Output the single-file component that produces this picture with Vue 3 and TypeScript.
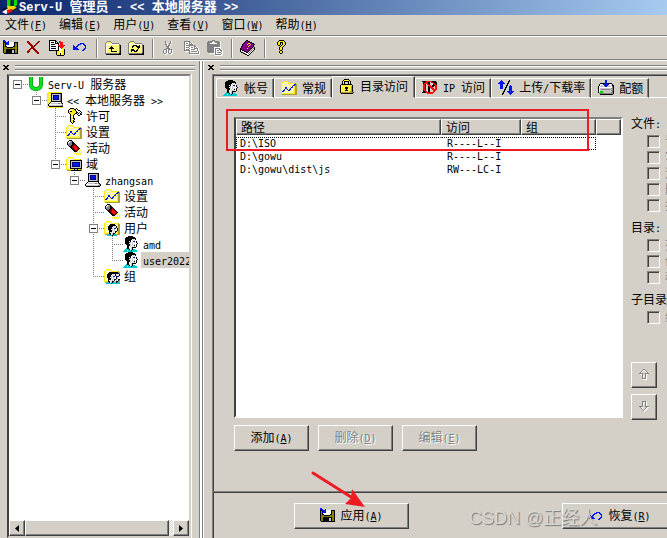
<script setup lang="ts">
import { h, ref } from 'vue'

type Art = string[]

const palette: Record<string, string> = {
  k: '#000000', w: '#ffffff', g: '#808080', l: '#c6c3c6', y: '#fff870', Y: '#ffe81c',
  o: '#a8a030', b: '#0018e8', B: '#000084', r: '#ff1010', R: '#9c0000', c: '#00c8d0',
  G: '#00d800', m: '#840084', v: '#d890d8', O: '#848200',
}

const blank: Art = Array(16).fill('................')

// Places one pixel drawing on top of another at an offset.
function layer(base: Art, top: Art, dx = 0, dy = 0): Art {
  return base.map((row, y) =>
    row.split('').map((px, x) => {
      const t = top[y - dy]?.[x - dx]
      return t && t !== '.' ? t : px
    }).join(''))
}

const folder: Art = [
  '................',
  '..YYYYY.........',
  '.YywywyY........',
  'YywywywYYYYYYYo.',
  'YwywywywywywyYoo',
  'YywywywywywywYoo',
  'YwywywywywywyYoo',
  'YywywywywywywYoo',
  'YwywywywywywyYoo',
  'YywywywywywywYoo',
  'YwywywywywywyYoo',
  'YywywywywywywYoo',
  'YwywywywywywyYoo',
  'YYYYYYYYYYYYYYoo',
  '.ooooooooooooooo',
  '................',
]
const barFolder: Art = [
  '................',
  '..gggg..........',
  '.gyyyyg.........',
  'gyyyyyyggggggg..',
  'gwwwwwwwwwwwwwg.',
  'gwyyyyyyyyyyyygk',
  'gwyyyyyyyyyyyygk',
  'gwyyyyyyyyyyyygk',
  'gwyyyyyyyyyyyygk',
  'gwyyyyyyyyyyyygk',
  'gwyyyyyyyyyyyygk',
  'gwyyyyyyyyyyyygk',
  'gwyyyyyyyyyyyygk',
  'ggggggggggggggkk',
  '.kkkkkkkkkkkkkkk',
  '................',
]
const chart: Art = [
  '............bb', '...........bb.', '..........b...', '...bb....bb...',
  '...bb...b.....', '..b..b.bb.....', '.bb...bb......', 'bb............',
]
const head: Art = [
  '.....kkkkk......',
  '...kkkkkkkkk....',
  '..kkkkkkkkkkk...',
  '..kkkkkkkwlwk...',
  '..kkkkkkwlwlw...',
  '..kkkkwkwwbbwk..',
  '..kkkkklwlwlwk..',
  '..kkkkwlwlwwwwk.',
  '...kkkklwlwlwk..',
  '....kkkwlwlkwk..',
  '....kkwlwlwlwk..',
  '....kkwwlkkkk...',
  '...ckklwlk......',
  '..cccckwlkcc....',
  '.cccwccckccccc..',
  'cccccccccccccc..',
]
const smallHead: Art = [
  '...kkkkk....', '..kkkkkkk...', '.kkkkkwlwk..', '.kkkkwlwlk..', '.kkkklwbbwk.',
  '.kkkwlwlwwk.', '..kkklwlwwk.', '..kkkwlwkk..', '..kwlwlwk...', '..kkwlkk....',
  '.cckwlkcc...', 'ccccckcccc..',
]
const monitor: Art = [
  '................',
  '...kkkkkkkkkkk..',
  '...kllllllllgk..',
  '...klBBBBBBlgk..',
  '...klBbbbbBlgk..',
  '...klBbbbbBlgk..',
  '...klBbbbbBlgk..',
  '...klBBBBBBlgk..',
  '...kllllllllgk..',
  '...kkkkkkkkkkk..',
  '..kwwwwwwwwwwk..',
  '.kwlllllllgglgk.',
  'kwwwwwwwwwwwwwgk',
  'kllllllllllllggk',
  '.kkkkkkkkkkkkkk.',
  '................',
]
const smallMonitor: Art = [
  'kkkkkkkkkkkk', 'kllllllllllk', 'klBBBBBBBBlk', 'klBbbbbbbBlk', 'klBbbbbbbBlk',
  'klBbbbbbbBlk', 'klBBBBBBBBlk', 'kllllllllllk', 'kkkkkkkkkkkk', '....kllk....', '.kkkkkkkkkk.',
]
const halo: Art = [
  '.YYYYYYYYYYYYY..', 'YYyYyYyYyYyYyY..', 'YyYyYyYyYyYyYy..', 'YYyYyYyYyYyYyY..',
  'YyYyYyYyYyYyYy..', 'YYyYyYyYyYyYyY..', 'YyYyYyYyYyYyYy..', 'YYyYyYyYyYyYyY..',
  'YyYyYyYyYyYyYy..', 'YYyYyYyYyYyYyY..', 'YYyYyYyYyYyYyYy.', 'YyYyYyYyYyYyYyY.',
  'YyYyYyYyYyYyYyY.', 'YYyYyYyYyYyYyYy.', 'YyYyYyYyYyYyYyY.', 'YYYYYYYYYYYYYYY.',
]

const art: Record<string, Art> = {
  save: [
    'bb..............', 'bbb..b..........', 'kkbbbbwwwwwkkkk.', 'kOkbbbwwwwwkOOk.',
    'kObbbbwwwwwkOOk.', 'kOkwwwwwwwwkOOk.', 'kOkkwwwwwwkkOOk.', 'kOOOkkkkkkOOOOk.',
    'kOOOOOOOOOOOOOk.', 'kOOkkkkkkkkkOOk.', 'kOOkkkkkkllkOOk.', 'kOOkkkkkkllkOOk.',
    'kOOkkkkkkllkOOk.', '.kkkkkkkkkkkkkk.',
  ],
  remove: [
    '................', '.RR.........RR..', '.RRR.......RR...', '..RRR.....RR....',
    '...RRR...RR.....', '....RRR.RR......', '.....RRRR.......', '.....RRR........',
    '....RRRRR.......', '...RR..RRR......', '..RR....RRR.....', '.RRR.....RRR....',
    '.RR.......RRR...', '...........RR...',
  ],
  export: [
    'kkkkkkk.........', 'kwwwwwkk..rr....', 'kwkkkwkwk.rrrr..', 'kwwwwwkkkk.rrr..',
    'kwkkkkwwwk.rrr..', 'kwwwwwwwwrrrrrrr', 'kwkkkkkwwkrrrrr.', 'kwwwwwwwwkwrrr..',
    'kwkkkkkwwkwwrYY.', 'kwwwwwwwwkwwwYYk', 'kkkkkkkkkkwwwYYk', '.......kYYYYYYYk',
    '.......kYYwwwYYk', '.......kYYwkwYYk', '.......kYYwkwYYk', '........kkkkkkk.',
  ],
  undo: [
    '................', '................', '................', '........bbbb....',
    '......bbb..bb...', '.b...bb.....bb..', '.bb.bb.......b..', '.bbbb........b..',
    '.bbbbb......bb..', '.bbbbbb....bb...', '..........bb....', '................',
  ],
  up: layer(barFolder, ['..k......', '.kkk.....', 'kkkkk....', '..k......', '..k......', '..kkkkkk.'], 4, 6),
  refresh: layer(barFolder, ['..kkkk..k', '.kk..kkkk', '.k....kkk', '.......k.', 'kkk...k..', 'kkkk.kk..', 'k..kkk...'], 3, 5),
  cut: [
    '................', '....g....gw.....', '....gw...gw.....', '....gw..ggw.....',
    '....ggw.gw......', '.....gwggw......', '.....gggw.......', '......ggw.......',
    '.....ggggw......', '...gggwgggg.....', '..gwwgwgwwgw....', '..gw.gwgw.gw....',
    '..gw.gwgw.gw....', '...ggww.ggww....', '....ww...ww.....', '................',
  ],
  copy: [
    '................', 'gggggg..........', 'gwwwwggw........', 'gwggwgwgw.......',
    'gwwwwggggw......', 'gwggggggggg.....', 'gwwwwgwwwwggw...', 'gwgggwwggwgwgw..',
    'gwwwwgwwwwggggw.', 'gwgggwwggggwwgw.', 'ggggggwwwwwwwgw.', '.wwwwgwggggggwgw',
    '.....gwwwwwwwwgw', '.....ggggggggggw', '......wwwwwwwwww', '................',
  ],
  paste: [
    '.....ggg........', '.gggggwggggg....', 'gggggwwwgggggw..', 'gggwwwwwwwgggw..',
    'gggggggggggggw..', 'gggggggggggggw..', 'gggggggggggggw..', 'gggggggwwwwwww..',
    'gggggggwgggggw..', 'gggggggwgwwwggw.', 'gggggggwgwggwggw', 'gggggggwgwwwwwgw',
    '.ggggggwgwggggww', '..wwwwwwgwwwwwgw', '.......wggggggww', '........wwwwwww.',
  ],
  book: [
    '......kk........', '.....kmmkk......', '....kmmmmmkk....', '...kmmmmYYmmkk..',
    '..kmmmmYmmYmmmk.', '..kmmmmmmYmmmk..', '.kmmmmmmYmmmmk..', '.kmmmmmmmmmmk.k.',
    'kmmmmmmYmmmk.gk.', 'kkmmmmmmmmk.gwk.', 'kwkkmmmmmk.gwk..', 'kvwwkkmmk.gwk...',
    '.kkvwwkk.gwk....', '...kkvwwgwk.....', '.....kkwwk......', '.......kk.......',
  ],
  help: [
    '......kkkkk.....', '.....kYYYYYk....', '....kYYkkkYYk...', '....kYYk.kYYk...',
    '....kYYk.kYYk...', '.....kk.kYYk....', '.......kYYk.....', '......kYYk......',
    '......kYYk......', '......kYYk......', '.......kk.......', '......kYYk......',
    '......kYYk......', '.......kk.......',
  ],
  server: layer(halo, monitor, 1, 0),
  domains: layer(folder, smallMonitor, 4, 4),
  host: monitor,
  license: [
    '....kkkk..k.....', '...kYYYYkkwk....', '..kYwYYYYkwwkk..', '..kYkkYYYYkwwwk.',
    '..kYYYYYYYkkwgwk', '...kYYYYYkkwkwkg', '....kYYYk..kwwkk', '....kYYk....kk..',
    '....kYwk........', '....kYYk........', '....kYYkk.......', '....kYwYk.......',
    '....kYYk........', '....kYYkk.......', '.....kYk........', '......k.........',
  ],
  settings: layer(folder, chart, 1, 4),
  activity: [
    '...kkk..........', '..kwlgk.........', '.kwlggkk........', '.klgggkkk.......',
    '.kggggkkRk......', '..kggkkRRRk.....', '...kkkRRrrRk....', '....kkRRrrrRk...',
    '.....kkRrrrrRk..', '......kkRrrRkY..', '.......kkRRkYwY.', '........kkkYwYwY',
    '.........YwYwYwY', '........YwYwYwYw', '.........wYwYwY.', '................',
  ],
  user: head,
  users: layer(folder, smallHead, 3, 4),
  groups: layer(layer(folder, smallHead, 6, 4), smallHead, 2, 4),
  lock: [
    '................', '.....kkkkk......', '....kYwYwYk.....', '...kYkkkkkYk....',
    '...kwk...kwk....', '...kYk...kYk....', '..kkkkkkkkkkk...', '.kYyYyYyYyYyYk..',
    '.kyYyYyYyYyYok..', '.kYyYykkkYyYok..', '.kyYyYkkkyYyok..', '.kYyYyYkyYyYok..',
    '.kyYyYkkkyYyok..', '.kYyYyYyYyYook..', '.kooooooooooook.', '..kkkkkkkkkkkk..',
  ],
  ip: [
    '................', 'kkkkrrrrrrkkkk..', '.kkrrrkk.rrkkkk.', '.krrrrkk...rrkk.',
    '.rrk.rrk...krrk.', '.rrk..rrr.kkkrr.', '.rrk..krrrkk.rr.', '.rrk..kkrrr..rr.',
    '.rrk..kk.rrr.rr.', '.rrk..kk..rrrrr.', '.krr..kk...rrr..', '.kkrr.kk...rr...',
    'kkkkrrrkrrrr....', '.....rrrrrr.....', '................', '................',
  ],
  rates: [
    '...b.......k....', '..bbb.....kk....', '.bbbbb....k.....', 'bbbbbbb..kk.....',
    '..bbb....k......', '..bbb...kk..b...', '..bbb...k..bbb..', '..bbb..kk..bbb..',
    '..bbb..k...bbb..', '......kk...bbb..', '......k....bbb..', '.....kk..bbbbbbb',
    '.....k....bbbbb.', '....kk.....bbb..', '....k.......b...', '................',
  ],
  quota: [
    '.......bb.......', '.......bb.......', '.......bb.......', '..kkkkkbbkkkkk..',
    '.kwwwbbbbbbwwwk.', '.kwllwbbbbllwlkk', 'kwlllllbbllllwgk', 'kwwwwwwwwwwwwwgk',
    'kwlllllllllllggk', 'kwlgggggggggllgk', 'kwlllllllllllggk', 'kwGGGlllllllllgk',
    'klGGGllllllllggk', '.ggggggggggggggk', '..kkkkkkkkkkkkk.', '................',
  ],
  restore: layer(blank, ['........bbbb....', '......bbb..bb...', '.b...bb.....bb..', '.bb.bb.......b..', '.bbbb........b..', '.bbbbb......bb..', '.bbbbbb....bb...', '..........bb....'], 0, 4),
  moveUp: [
    '................', '................', '.......gg.......', '......gwwg......', '.....gw..wg.....',
    '....gw....wg....', '...gggg..gggg...', '....wwg..gww....', '......gw.gw.....', '......gw.gw.....',
    '......gw.gw.....', '......ggggw.....', '.......wwww.....',
  ],
  moveDown: [
    '................', '................', '......gggg......', '......gwwgw.....', '......gw.gw.....',
    '......gw.gw.....', '......gw.gw.....', '...gggg..gggg...', '....gww...gww...', '.....gw..gww....',
    '......gwgww.....', '.......gww......', '........w.......',
  ],
}

function PixelIcon(props: { name: string }) {
  const colours: Record<string, string> = {}
  art[props.name].forEach((row, y) => {
    row.split('').forEach((px, x) => {
      if (px !== '.') colours[px] = (colours[px] ?? '') + `M${x} ${y}h1v1h-1z`
    })
  })
  return h('svg', { class: 'pixel-icon', viewBox: '0 0 16 16', width: 16, height: 16, 'aria-hidden': 'true' },
    Object.entries(colours).map(([px, d]) => h('path', { d, fill: palette[px] })))
}
PixelIcon.props = ['name']

// Half-width characters use a monospaced face; "(X)" underlines its access key.
function Caption(props: { text: string }) {
  const parts = props.text.match(/[\x20-\x7e]+|[^\x20-\x7e]+/g) ?? []
  return h('span', { class: 'caption' }, parts.map((part) => {
    const key = /^\(([A-Z])\)$/.exec(part)
    if (key) return h('span', { class: 'half' }, ['(', h('u', key[1]), ')'])
    return /^[\x20-\x7e]/.test(part) ? h('span', { class: 'half' }, part) : part
  }))
}
Caption.props = ['text']

const menus = ['文件(F)', '编辑(E)', '用户(U)', '查看(V)', '窗口(W)', '帮助(H)']
const toolGroups = [
  [['save', '保存'], ['remove', '删除'], ['export', '导出'], ['undo', '撤消']],
  [['up', '向上'], ['refresh', '刷新']],
  [['cut', '剪切'], ['copy', '复制'], ['paste', '粘贴']],
  [['book', '手册']],
  [['help', '帮助']],
]

// guides: one letter per 19px column.
// n none, l line, t tee, e end, r root expander, x expander with line, y last expander
interface Node { guides: string; icon: string; text: string; selected?: boolean }
const nodes: Node[] = [
  { guides: 'r', icon: 'logo', text: 'Serv-U 服务器' },
  { guides: 'ny', icon: 'server', text: '<< 本地服务器 >>' },
  { guides: 'nnt', icon: 'license', text: '许可' },
  { guides: 'nnt', icon: 'settings', text: '设置' },
  { guides: 'nnt', icon: 'activity', text: '活动' },
  { guides: 'nny', icon: 'domains', text: '域' },
  { guides: 'nnny', icon: 'host', text: 'zhangsan' },
  { guides: 'nnnnt', icon: 'settings', text: '设置' },
  { guides: 'nnnnt', icon: 'activity', text: '活动' },
  { guides: 'nnnnx', icon: 'users', text: '用户' },
  { guides: 'nnnnlt', icon: 'user', text: 'amd' },
  { guides: 'nnnnle', icon: 'user', text: 'user2022', selected: true },
  { guides: 'nnnne', icon: 'groups', text: '组' },
]

const tabs = [
  { icon: 'user', text: '帐号' },
  { icon: 'settings', text: '常规' },
  { icon: 'lock', text: '目录访问' },
  { icon: 'ip', text: 'IP 访问' },
  { icon: 'rates', text: '上传/下载率' },
  { icon: 'quota', text: '配额' },
]
const activeTab = ref(2)

const rows = ref([
  { path: 'D:\\ISO', access: 'R----L--I' },
  { path: 'D:\\gowu', access: 'R----L--I' },
  { path: 'D:\\gowu\\dist\\js', access: 'RW---LC-I' },
])
const focused = ref(0)

const rights = [
  { title: '文件:', items: ['读', '写', '追', '删', '执'] },
  { title: '目录:', items: ['列', '创', '移'] },
  { title: '子目录:', items: ['继'] },
]
</script>

<template>
  <div class="window">
    <header class="title">
      <svg class="title-icon" viewBox="0 0 16 14" width="16" height="14" aria-hidden="true">
        <path d="M5 0h4v6H5zM12 0h3v5l-3 3z" fill="#00e000" />
        <path d="M5 6h7l3 2-4 3H6z" fill="#f4d800" />
        <path d="M0 12l5-3 4 2-5 3z" fill="#ffffff" />
        <path d="M5 10l5-1 1 2-6 3z" fill="#f01010" />
        <path d="M9 0v6M0 10l5-2M10 11l5-3" stroke="#000" fill="none" />
      </svg>
      <Caption text="Serv-U 管理员 - << 本地服务器 >>" />
    </header>

    <nav class="menu">
      <button v-for="m in menus" :key="m" type="button"><Caption :text="m" /></button>
    </nav>

    <div class="toolbar" role="toolbar">
      <div v-for="(group, i) in toolGroups" :key="i" class="tool-group">
        <button v-for="[name, label] in group" :key="name" type="button" :aria-label="label">
          <PixelIcon :name="name" />
        </button>
      </div>
    </div>

    <main class="panes">
      <section class="pane tree-pane">
        <div class="grip">
          <button type="button" aria-label="关闭"><svg viewBox="0 0 6 5" width="6" height="5"><path d="M0 0h2v1h2V0h2v1H5v1H4v1h1v1h1v1H4V4H2v1H0V4h1V3h1V2H1V1H0z" /></svg></button>
          <i></i>
        </div>
        <div class="tree-box">
          <div class="tree" role="tree">
            <div v-for="(n, i) in nodes" :key="i" class="node" role="treeitem" :aria-selected="!!n.selected">
              <span v-for="(g, j) in n.guides" :key="j" class="guide" :class="'g-' + g"><b v-if="'rxy'.includes(g)" class="box"></b></span>
              <svg v-if="n.icon === 'logo'" class="logo" viewBox="0 0 16 16" width="16" height="16" aria-hidden="true">
                <path d="M3 1v7q0 5 5 5t5-5V1" fill="none" stroke="#008000" stroke-width="4" />
                <path d="M3 1v7q0 5 5 5t5-5V1" fill="none" stroke="#10e020" stroke-width="3" />
              </svg>
              <PixelIcon v-else :name="n.icon" />
              <span class="node-text" :class="{ selected: n.selected }"><Caption :text="n.text" /></span>
            </div>
          </div>
          <div class="scroll">
            <button type="button" aria-label="向左滚动"><svg viewBox="0 0 4 7" width="4" height="7"><path d="M4 0v7L0 3.5z" /></svg></button>
            <span class="thumb"></span>
            <span class="track"></span>
            <button type="button" aria-label="向右滚动"><svg viewBox="0 0 4 7" width="4" height="7"><path d="M0 0v7l4-3.5z" /></svg></button>
          </div>
        </div>
      </section>

      <div class="splitter"></div>

      <section class="pane detail-pane">
        <div class="grip">
          <button type="button" aria-label="关闭"><svg viewBox="0 0 6 5" width="6" height="5"><path d="M0 0h2v1h2V0h2v1H5v1H4v1h1v1h1v1H4V4H2v1H0V4h1V3h1V2H1V1H0z" /></svg></button>
          <i></i>
        </div>
        <div class="sheet">
          <div class="tabs" role="tablist">
            <button v-for="(t, i) in tabs" :key="t.text" type="button" role="tab" class="tab" :class="{ active: i === activeTab }" :aria-selected="i === activeTab" @click="activeTab = i">
              <PixelIcon :name="t.icon" /><Caption :text="t.text" />
            </button>
            <span class="tab-fill"></span>
          </div>

          <div class="content">
            <div class="list-side">
              <div class="list">
                <table>
                  <colgroup><col class="c-path" /><col class="c-access" /><col class="c-group" /><col /></colgroup>
                  <thead>
                    <tr>
                      <th><span><Caption text="路径" /></span></th>
                      <th><span><Caption text="访问" /></span></th>
                      <th><span><Caption text="组" /></span></th>
                      <th><span></span></th>
                    </tr>
                  </thead>
                  <tbody>
                    <tr v-for="(r, i) in rows" :key="r.path" :class="{ focus: i === focused }" @click="focused = i">
                      <td><Caption :text="r.path" /></td>
                      <td><Caption :text="r.access" /></td>
                      <td></td>
                      <td></td>
                    </tr>
                  </tbody>
                </table>
              </div>
              <div class="actions">
                <button type="button" class="push"><Caption text="添加(A)" /></button>
                <button type="button" class="push" disabled><Caption text="删除(D)" /></button>
                <button type="button" class="push" disabled><Caption text="编辑(E)" /></button>
              </div>
            </div>

            <div class="rights">
              <fieldset v-for="group in rights" :key="group.title">
                <legend><Caption :text="group.title" /></legend>
                <label v-for="item in group.items" :key="item"><input type="checkbox" disabled />{{ item }}</label>
              </fieldset>
              <div class="movers">
                <button type="button" class="push" disabled aria-label="上移"><PixelIcon name="moveUp" /></button>
                <button type="button" class="push" disabled aria-label="下移"><PixelIcon name="moveDown" /></button>
              </div>
            </div>
          </div>

          <footer class="bottom">
            <button type="button" class="push wide"><PixelIcon name="save" /><Caption text="应用(A)" /></button>
            <button type="button" class="push wide"><PixelIcon name="restore" /><Caption text="恢复(R)" /></button>
            <span class="watermark">CSDN @正经人</span>
          </footer>
        </div>
      </section>
    </main>

    <div class="mark-box"></div>
    <svg class="mark-arrow" viewBox="0 0 56 38" width="56" height="38" aria-hidden="true">
      <path d="M2 2L40 26" stroke="#ed1c24" stroke-width="3" stroke-linecap="round" />
      <path d="M54 36L34 33l6-6 1-9z" fill="#ed1c24" />
    </svg>
  </div>
</template>

<style>
body { background: #d4d0c8; }
.pixel-icon { display: block; flex: none; shape-rendering: crispEdges; }
.caption { white-space: pre; }
.caption .half { font-family: "DejaVu Sans Mono", "Liberation Mono", monospace; font-size: 10px; }
.title .caption .half { font-family: "Liberation Mono", monospace; font-size: 12px; }
</style>

<style scoped>
.window {
  position: relative;
  display: flex;
  flex-direction: column;
  height: 100vh;
  overflow: hidden;
  background: #d4d0c8;
  color: #000;
  font: 12px/16px "Noto Sans CJK SC", sans-serif;
  cursor: default;
}
button { margin: 0; padding: 0; border: 0; background: none; color: inherit; font: inherit; }

.title {
  display: flex;
  flex: none;
  gap: 1px;
  height: 15px;
  padding-left: 2px;
  background: linear-gradient(90deg, #0a246a, #a6caf0);
  color: #fff;
  font-size: 13px;
  font-weight: bold;
  line-height: 12px;
}
.title-icon { flex: none; }

.menu {
  display: flex;
  flex: none;
  gap: 12px;
  height: 20px;
  padding-left: 5px;
  border-bottom: 1px solid #808080;
  white-space: nowrap;
}
.toolbar {
  display: flex;
  flex: none;
  align-items: center;
  height: 22px;
  padding-left: 3px;
  border-top: 1px solid #fff;
  border-bottom: 1px solid #808080;
}
.tool-group { display: flex; align-items: center; gap: 7px; }
.tool-group + .tool-group {
  height: 19px;
  margin-left: 8px;
  padding-left: 8px;
  border-left: 1px solid #808080;
  box-shadow: inset 1px 0 #fff;
}

.panes { display: flex; flex: 1; min-height: 0; border-top: 1px solid #fff; }
.pane { display: flex; flex-direction: column; min-width: 0; }
.tree-pane { flex: none; width: 199px; }
.splitter { flex: none; width: 2px; border-right: 1px solid #808080; border-left: 1px solid #808080; background: #fff; }
.detail-pane { flex: 1; border-left: 1px solid #fff; }
.grip { display: flex; flex: none; align-items: center; gap: 6px; height: 13px; padding: 0 4px 0 3px; }
.grip button { display: flex; }
.grip i { flex: 1; height: 2px; border-top: 1px solid #fff; border-bottom: 1px solid #808080; box-shadow: 0 1px #fff, 0 -1px #808080; }
.detail-pane .grip { padding: 0 0 0 4px; }

.tree-box {
  display: flex;
  flex: 1;
  flex-direction: column;
  min-height: 0;
  margin: 0 8px 0 7px;
  border: 2px solid;
  border-color: #808080 #d4d0c8 #d4d0c8 #404040;
  background: #fff;
  box-shadow: 1px 0 #fff;
}
.tree { flex: 1; min-height: 0; overflow: hidden; }
.node { display: flex; height: 16px; white-space: nowrap; }
.logo { flex: none; }
.guide { position: relative; display: flex; flex: none; align-items: center; width: 19px; height: 16px; }
.g-l::before, .g-t::before, .g-x::before, .g-e::before, .g-y::before {
  content: "";
  position: absolute;
  top: 0;
  left: 8px;
  width: 1px;
  height: 16px;
  background: repeating-linear-gradient(#808080 0 1px, #fff 1px 2px);
}
.g-e::before, .g-y::before { height: 8px; }
.g-t::after, .g-e::after, .g-x::after, .g-y::after, .g-r::after {
  content: "";
  position: absolute;
  top: 8px;
  left: 8px;
  width: 11px;
  height: 1px;
  background: repeating-linear-gradient(90deg, #808080 0 1px, #fff 1px 2px);
}
.box {
  position: relative;
  z-index: 1;
  box-sizing: border-box;
  width: 9px;
  height: 9px;
  margin: 1px 0 0 4px;
  border: 1px solid #808080;
  background: linear-gradient(#000, #000) center / 5px 1px no-repeat #fff;
}
.node-text { margin-left: 2px; padding: 0 2px; }
.node-text.selected { background: #d4d0c8; }

.scroll { display: flex; flex: none; height: 16px; background: #d4d0c8; }
.scroll button, .thumb {
  display: flex;
  align-items: center;
  justify-content: center;
  box-sizing: border-box;
  width: 16px;
  border: 1px solid;
  border-color: #fff #404040 #404040 #fff;
  box-shadow: inset -1px -1px #808080;
}
.scroll .thumb { flex: 1; }
.track { width: 4px; background: repeating-conic-gradient(#fff 0 25%, #d4d0c8 0 50%) 0 0 / 2px 2px; }

.sheet {
  display: flex;
  flex: 1;
  flex-direction: column;
  min-height: 0;
  margin-left: 8px;
  border-top: 1px solid #808080;
  border-left: 1px solid #808080;
  box-shadow: inset 1px 1px #404040;
}
.tabs { display: flex; flex: none; align-items: flex-end; height: 23px; padding-left: 3px; }
.tab {
  display: flex;
  flex: none;
  align-items: center;
  gap: 5px;
  box-sizing: border-box;
  height: 20px;
  padding: 0 5px 0 6px;
  border-top: 1px solid #fff;
  border-right: 1px solid #404040;
  border-bottom: 1px solid #fff;
  border-left: 1px solid #fff;
  box-shadow: inset -1px 0 #808080;
  white-space: nowrap;
}
.tab.active { height: 22px; padding: 0 6px 2px 6px; border-bottom-color: transparent; }
.tab-fill { flex: 1; border-bottom: 1px solid #fff; }

.content { display: flex; flex: 1; gap: 8px; min-height: 0; padding: 17px 0 40px 21px; }
.list-side { display: flex; flex: 1; flex-direction: column; gap: 7px; min-width: 0; padding-top: 2px; }
.list {
  flex: 1;
  min-height: 0;
  overflow: hidden;
  border: 2px solid;
  border-color: #808080 #fff #fff #404040;
  background: #fff;
}
table { width: 100%; border-collapse: separate; border-spacing: 0; table-layout: fixed; }
.c-path { width: 205px; }
.c-access { width: 80px; }
.c-group { width: 75px; }
th { height: 18px; padding: 0; vertical-align: top; font-weight: normal; text-align: left; }
th > span {
  display: block;
  box-sizing: border-box;
  height: 16px;
  padding-left: 4px;
  border: 1px solid;
  border-color: #fff #404040 #404040 #fff;
  background: #d4d0c8;
  box-shadow: inset -1px -1px #808080;
  line-height: 14px;
}
td {
  height: 11px;
  padding: 0 0 0 5px;
  border: 1px solid transparent;
  font-family: "DejaVu Sans Mono", "Liberation Mono", monospace;
  font-size: 10px;
  line-height: 11px;
}
td:first-child { padding-left: 3px; }
.focus td:not(:last-child) { border-top: 1px dotted #000; border-bottom: 1px dotted #000; }
.focus td:first-child { border-left: 1px dotted #000; }
.focus td:nth-child(3) { border-right: 1px dotted #000; }

.actions { display: flex; flex: none; gap: 9px; }
.push {
  display: flex;
  flex: none;
  align-items: center;
  justify-content: center;
  gap: 4px;
  box-sizing: border-box;
  width: 75px;
  height: 26px;
  border: 1px solid;
  border-color: #fff #404040 #404040 #fff;
  box-shadow: inset -1px -1px #808080;
  white-space: nowrap;
}
.push:disabled { color: #808080; text-shadow: 1px 1px #fff; }
.push.wide { width: 115px; }

.rights { flex: none; width: 36px; overflow: hidden; }
fieldset { min-width: 0; margin: 0 0 6px; padding: 0; border: 0; white-space: nowrap; }
legend { height: 16px; margin-bottom: 2px; padding: 0; }
label { display: flex; align-items: center; gap: 5px; height: 16px; padding-left: 16px; color: #808080; text-shadow: 1px 1px #fff; }
input {
  appearance: none;
  flex: none;
  box-sizing: border-box;
  width: 13px;
  height: 13px;
  margin: 0;
  border: 1px solid;
  border-color: #808080 #fff #fff #808080;
  box-shadow: inset 1px 1px #404040;
}
.movers { display: flex; flex-direction: column; gap: 6px; margin-top: 37px; }
.movers .push { width: 26px; }

.bottom {
  position: relative;
  display: flex;
  flex: none;
  gap: 153px;
  height: 35px;
  padding: 11px 0 0 81px;
  overflow: hidden;
  border-top: 1px solid #808080;
  box-shadow: inset 0 1px #404040;
}
.watermark {
  position: absolute;
  top: 14px;
  left: 256px;
  color: #d8d6d2;
  font-family: "Liberation Sans", "Noto Sans CJK SC", sans-serif;
  font-size: 18px;
  line-height: 24px;
  text-shadow: 1px 1px 1px #777;
  white-space: nowrap;
}

.mark-box { position: absolute; top: 109px; left: 226px; box-sizing: border-box; width: 363px; height: 42px; border: 2px solid #ed1c24; }
.mark-arrow { position: absolute; top: 471px; left: 311px; }
</style>
